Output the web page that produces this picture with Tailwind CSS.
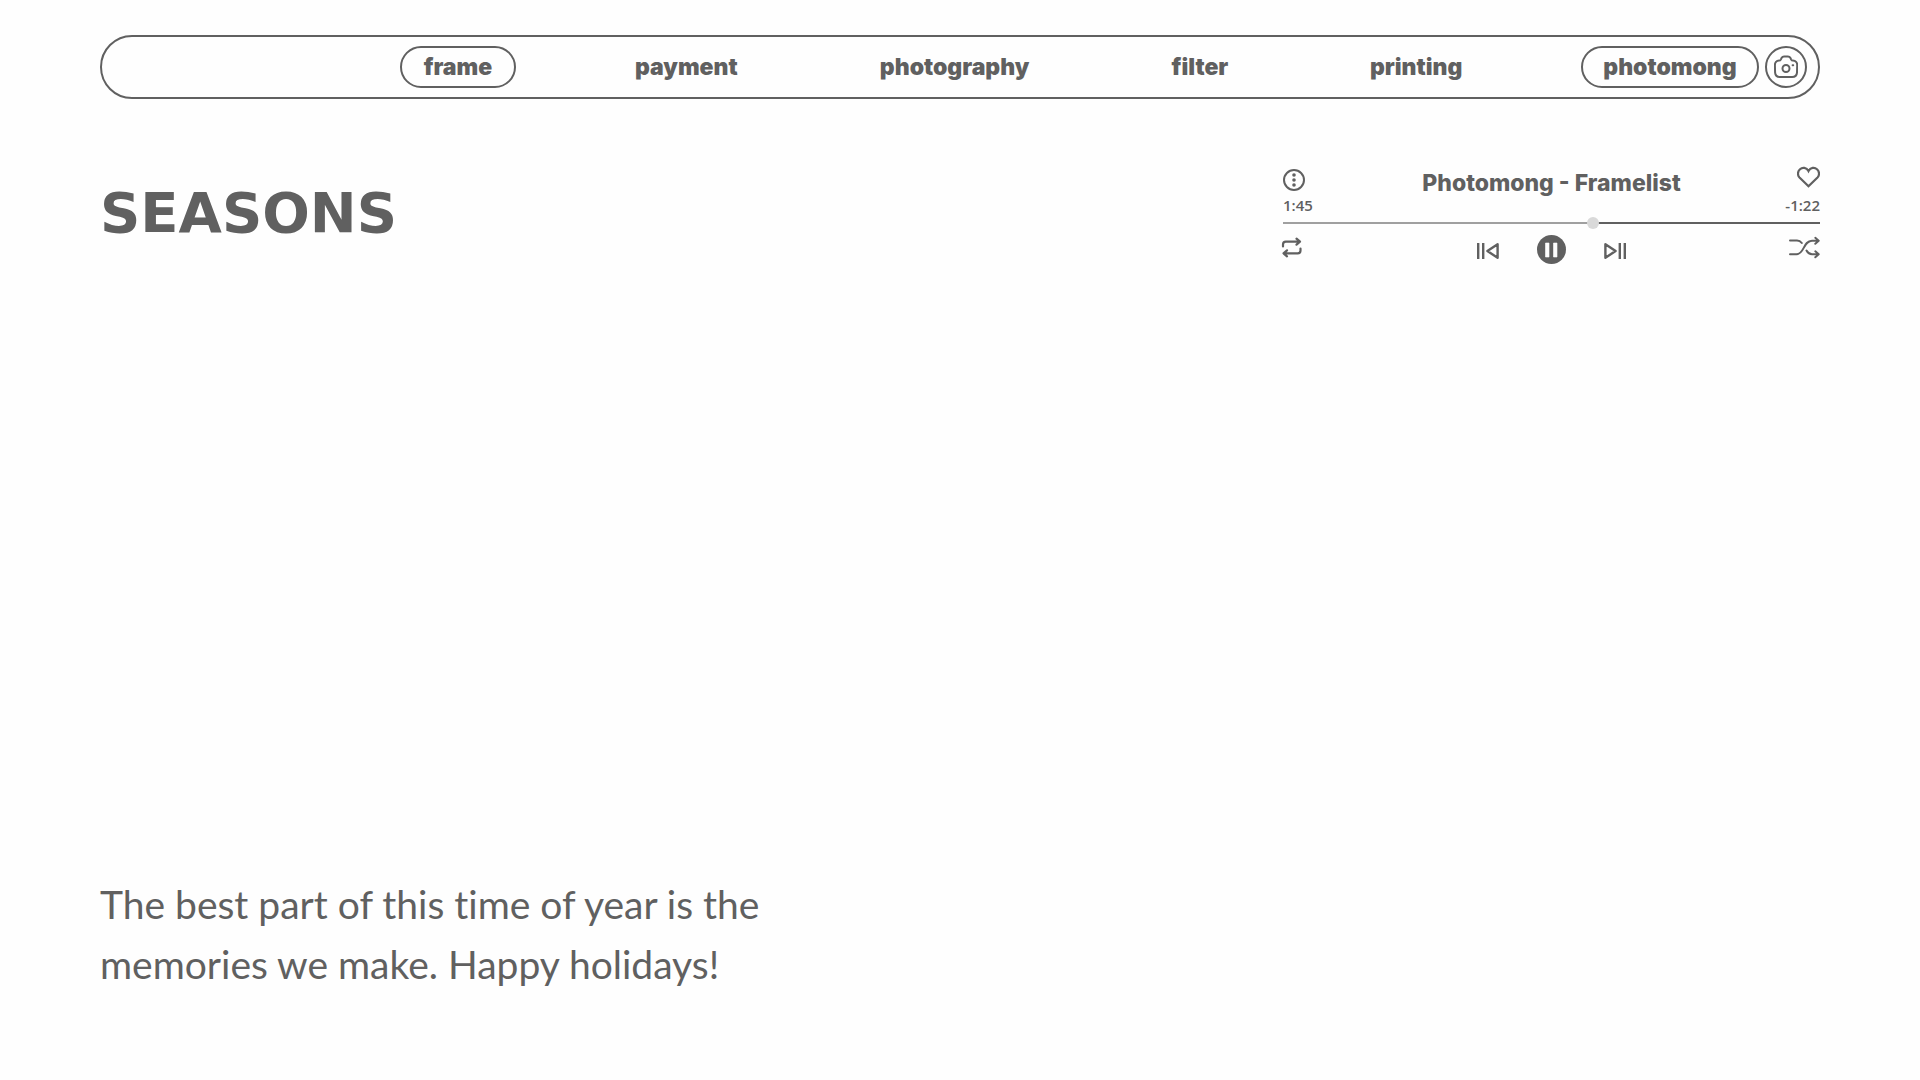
<!DOCTYPE html>
<html lang="en">
<head>
<meta charset="utf-8">
<meta name="viewport" content="width=device-width, initial-scale=1">
<title>Photomong</title>
<script src="https://cdn.jsdelivr.net/npm/@tailwindcss/browser@4"></script>
</head>
<body class="flex min-h-screen flex-col bg-[#fefefe] px-[100px] pt-[35px] pb-[86px] font-[Inter,sans-serif] text-[#606060]">
  <header>
    <nav aria-label="Main" class="flex h-[64px] items-center rounded-full border-2 border-[#606060] pr-[11px] pl-[298px] text-[23px] font-black">
      <div class="flex flex-1 items-center justify-between">
        <a href="#frame" class="flex h-[42px] w-[116px] items-center justify-center rounded-full border-2 border-[#606060]">frame</a>
        <a href="#payment" class="flex h-[42px] w-[149px] items-center justify-center">payment</a>
        <a href="#photography" class="flex h-[42px] w-[196px] items-center justify-center">photography</a>
        <a href="#filter" class="flex h-[42px] w-[103px] items-center justify-center">filter</a>
        <a href="#printing" class="flex h-[42px] w-[138px] items-center justify-center">printing</a>
        <a href="#photomong" class="flex h-[42px] w-[178px] items-center justify-center rounded-full border-2 border-[#606060]">photomong</a>
      </div>
      <button type="button" aria-label="Camera" class="ml-[6px] flex size-[42px] items-center justify-center rounded-full border-2 border-[#606060]">
        <svg class="h-[24px] w-[24px]" viewBox="0 0 24 24" fill="none" stroke="currentColor" stroke-width="2" stroke-linecap="round" stroke-linejoin="round">
          <path d="M5.8 22h12.4c3.3 0 4.600-2 4.800-4.400l.2-7.300C23.400 7.600 21.500 5.600 18.900 5.600c-.7 0-1.400-.4-1.700-1l-.7-1.500C16 2.200 14.900 1.500 13.900 1.500h-3.800c-1 0-2.100.7-2.600 1.600l-.7 1.500c-.3.6-1 1-1.700 1C2.500 5.600.8 7.600.9 10.300l.2 7.300C1.300 20 2.500 22 5.800 22Z"/>
          <circle cx="12" cy="13.500" r="3.500"/>
          <path d="M18.600 10.300h.6"/>
        </svg>
      </button>
    </nav>
  </header>

  <main class="flex flex-1 flex-col justify-between">
    <div class="flex items-start justify-between pt-[67px]">
      <h1 class="mt-[19px] font-['DejaVu_Sans',sans-serif] text-[56px] leading-[56px] font-bold">SEASONS</h1>

      <section aria-label="Player" class="w-[537px]">
        <div class="flex items-start justify-between">
          <div class="flex w-[60px] flex-col items-start">
            <button type="button" aria-label="Info">
              <svg class="block h-[26px] w-[22px]" viewBox="0 0 22 26" fill="none" stroke="currentColor" stroke-width="2">
                <circle cx="11" cy="14" r="10"/>
                <g fill="currentColor" stroke="none"><circle cx="11" cy="9" r="1.800"/><circle cx="11" cy="14" r="1.800"/><circle cx="11" cy="19" r="1.800"/></g>
              </svg>
            </button>
            <span class="mt-[3px] font-['Open_Sans',sans-serif] text-[15px] leading-[20px] font-semibold">1:45</span>
          </div>
          <h2 class="text-[23px] leading-[34px] font-extrabold">Photomong - Framelist</h2>
          <div class="flex w-[60px] flex-col items-end">
            <button type="button" aria-label="Like">
              <svg class="block h-[26px] w-[23px]" viewBox="0 0 23 26" fill="none" stroke="currentColor" stroke-width="2.200" stroke-linejoin="miter">
                <path d="M11.500 5.100C9.500 1.200 5.300 1.100 3 3.200 0.400 5.600 0.400 9.300 2.500 11.500L11.500 20.300 20.500 11.500C22.600 9.300 22.600 5.600 20 3.200 17.700 1.100 13.500 1.200 11.500 5.100Z"/>
              </svg>
            </button>
            <span class="mt-[3px] font-['Open_Sans',sans-serif] text-[15px] leading-[20px] font-semibold">-1:22</span>
          </div>
        </div>

        <input type="range" aria-label="Position" min="0" max="100" step="0.1" value="57.9" class="mt-[2px] block h-[12px] w-full appearance-none bg-[linear-gradient(90deg,#a0a0a0_58%,#606060_58%)] bg-[length:100%_2px] bg-center bg-no-repeat [&::-webkit-slider-thumb]:size-[12px] [&::-webkit-slider-thumb]:appearance-none [&::-webkit-slider-thumb]:rounded-full [&::-webkit-slider-thumb]:bg-[#d9d9d9]">

        <div class="mt-[6px] flex items-center justify-between">
          <div class="flex w-[31px] justify-start">
            <button type="button" aria-label="Repeat">
              <svg class="block h-[29px] w-[20px] overflow-visible" viewBox="0 0 20 29" fill="none" stroke="currentColor" stroke-width="2.200" stroke-linecap="round" stroke-linejoin="round">
                <path d="M0 11.500V9.500Q0 6.700 2.800 6.700H17M13.500 3.700 17 6.700 13.500 9.700M17.500 13.500V15.500Q17.500 18.300 14.700 18.300H0.500M4 15.300 0.500 18.300 4 21.300"/>
              </svg>
            </button>
          </div>
          <div class="flex items-center gap-[38px]">
            <button type="button" aria-label="Previous">
              <svg class="block h-[29px] w-[22px]" viewBox="0 0 22 29" fill="none" stroke="currentColor" stroke-width="2.400" stroke-linejoin="round">
                <path d="M1.200 8v16M6.200 8v16M20.600 9.200v13.600L10.400 16Z"/>
              </svg>
            </button>
            <button type="button" aria-label="Pause">
              <svg class="block h-[29px] w-[29px]" viewBox="0 0 29 29">
                <circle cx="14.500" cy="14.500" r="14.500" fill="currentColor"/>
                <path d="M8.500 8h3.500v14H8.500ZM16.500 8H20v14h-3.500Z" fill="#fefefe" stroke="#fefefe" stroke-width=".6" stroke-linejoin="round"/>
              </svg>
            </button>
            <button type="button" aria-label="Next">
              <svg class="block h-[29px] w-[22px]" viewBox="0 0 22 29" fill="none" stroke="currentColor" stroke-width="2.400" stroke-linejoin="round">
                <path d="M20.800 8v16M15.800 8v16M1.400 9.200v13.600L11.600 16Z"/>
              </svg>
            </button>
          </div>
          <button type="button" aria-label="Shuffle">
            <svg class="block h-[29px] w-[31px]" viewBox="0 0 31 29" fill="none" stroke="currentColor" stroke-width="2" stroke-linecap="round" stroke-linejoin="round">
              <path d="M1 5.500H8C10.500 5.500 11.700 6.500 12.800 8M1 19.300H7.500C15.500 19.300 14 5.800 23 5.800H29.500M17.500 15.500C18.800 17.800 20.200 19.300 23 19.300H29.500M26.300 2.800 29.700 5.800 26.300 8.800M26.300 16.300 29.700 19.300 26.300 22.300"/>
            </svg>
          </button>
        </div>
      </section>
    </div>

    <p class="max-w-[700px] pt-[60px] font-[Lato,sans-serif] text-[39px] leading-[60px] [font-variant-ligatures:no-common-ligatures]">The best part of this time of year is the memories we make. Happy holidays!</p>
  </main>
</body>
</html>
